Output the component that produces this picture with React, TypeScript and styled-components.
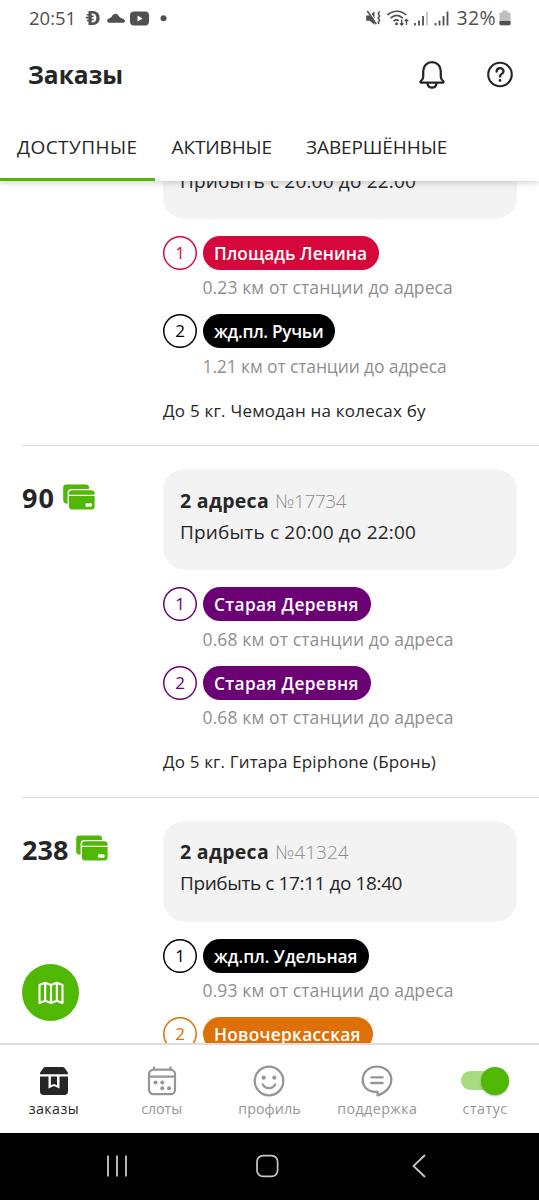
import React from 'react';
import styled, { createGlobalStyle } from 'styled-components';

const GREEN = '#50b805';
const INK = '#262626';
const GREY = '#8f8f8f';

const GlobalStyle = createGlobalStyle`
  * { box-sizing: border-box; }
  body {
    margin: 0;
    background: #fff;
    color: ${INK};
    font-family: 'Open Sans', 'Noto Sans', sans-serif;
  }
`;

interface Spacing {
  $ls?: number;
}

const Screen = styled.div`
  width: 539px;
  height: 1200px;
  display: flex;
  flex-direction: column;
  background: #fff;
  overflow: hidden;
`;

const Top = styled.header`
  position: relative;
  z-index: 2;
  height: 181px;
  flex: none;
  display: flex;
  flex-direction: column;
  background: #fff;
  box-shadow: 0 1px 7px rgba(0, 0, 0, 0.22);
`;

const StatusBar = styled.div`
  height: 35px;
  padding: 0 28px 0 29px;
  display: flex;
  justify-content: space-between;
  align-items: center;
  color: #505050;
`;

const StatusGroup = styled.div<{ $gap: number }>`
  display: flex;
  align-items: center;
  gap: ${(p) => p.$gap}px;
`;

const StatusText = styled.span<Spacing & { $size: number }>`
  font-size: ${(p) => p.$size}px;
  line-height: 35px;
  letter-spacing: ${(p) => p.$ls ?? 0}px;
`;

const TitleBar = styled.div`
  height: 80px;
  padding: 0 25px 1px 28px;
  display: flex;
  align-items: center;
  justify-content: space-between;
`;

const Title = styled.h1`
  margin: 0;
  font-size: 24.5px;
  font-weight: 700;
  line-height: 40px;
`;

const Actions = styled.div`
  display: flex;
  align-items: center;
  gap: 40px;
`;

const Tabs = styled.nav`
  flex: 1;
  display: flex;
`;

const Tab = styled.div<Spacing & { $active?: boolean }>`
  height: 66px;
  padding: 0 17px;
  font-size: 19px;
  line-height: 65px;
  letter-spacing: ${(p) => p.$ls ?? 0}px;
  white-space: nowrap;
  border-bottom: 3px solid ${(p) => (p.$active ? GREEN : 'transparent')};
`;

const List = styled.main`
  position: relative;
  flex: 1;
  overflow: hidden;
`;

const Feed = styled.div`
  margin: -87px 0 0 22px;
`;

const Order = styled.article`
  height: 351.4px;
  padding-top: 23px;
  border-top: 1px solid #dadada;
  display: flex;
`;

const PriceColumn = styled.div`
  width: 141px;
  flex: none;
  display: flex;
  align-items: center;
  height: 55px;
  gap: 8px;
`;

const Price = styled.span<Spacing>`
  margin-top: 3px;
  font-size: 27px;
  font-weight: 700;
  line-height: 30px;
  letter-spacing: ${(p) => p.$ls ?? 0}px;
`;

const Details = styled.div`
  width: 354px;
  flex: none;
`;

const Summary = styled.div`
  height: 101px;
  padding: 0 17px 22.5px;
  display: flex;
  flex-direction: column;
  justify-content: flex-end;
  border-radius: 22px;
  background: #f3f3f3;
`;

const SummaryLine = styled.div<Spacing>`
  font-size: 19px;
  line-height: 31px;
  letter-spacing: ${(p) => p.$ls ?? 0}px;
  white-space: nowrap;
`;

const AddressCount = styled.b`
  font-weight: 700;
  font-size: 19.5px;
  letter-spacing: 0.3px;
`;

const OrderNumber = styled.span<Spacing>`
  margin-left: 6px;
  color: #8c8c8c;
  font-weight: 300;
  letter-spacing: ${(p) => p.$ls ?? 0}px;
`;

const Stops = styled.div`
  margin-top: 17px;
  display: flex;
  flex-direction: column;
  gap: 15px;
`;

const Stop = styled.div`
  display: grid;
  grid-template-columns: 34px 1fr;
  column-gap: 5.5px;
  row-gap: 5.3px;
`;

const StopIndex = styled.div<{ $color: string }>`
  width: 34px;
  height: 34px;
  border-radius: 50%;
  box-shadow: inset 0 0 0 1.5px ${(p) => p.$color};
  color: ${(p) => p.$color};
  font-size: 17px;
  line-height: 34px;
  text-align: center;
`;

const Station = styled.div<Spacing & { $color: string }>`
  justify-self: start;
  height: 34px;
  padding: 0 12px 0 11.5px;
  border-radius: 17px;
  background: ${(p) => p.$color};
  color: #fff;
  font-size: 17.3px;
  font-weight: 600;
  line-height: 35px;
  letter-spacing: ${(p) => p.$ls ?? 0}px;
  white-space: nowrap;
`;

const Distance = styled.div<Spacing>`
  grid-column: 2;
  color: ${GREY};
  font-size: 17.5px;
  line-height: 24px;
  letter-spacing: ${(p) => p.$ls ?? 0}px;
  white-space: nowrap;
`;

const Note = styled.div<Spacing>`
  margin-top: 21px;
  font-size: 17px;
  line-height: 24px;
  letter-spacing: ${(p) => p.$ls ?? 0}px;
  white-space: nowrap;
`;

const MapButton = styled.button`
  position: absolute;
  left: 22px;
  bottom: 22px;
  width: 57px;
  height: 57px;
  padding: 0;
  border: 0;
  border-radius: 50%;
  background: ${GREEN};
  display: flex;
  align-items: center;
  justify-content: center;
`;

const BottomNav = styled.nav`
  height: 90px;
  flex: none;
  border-top: 2px solid #dedede;
  display: grid;
  grid-template-columns: repeat(5, 1fr);
  background: #fff;
`;

const NavItem = styled.div<{ $active?: boolean }>`
  padding-top: 18px;
  display: flex;
  flex-direction: column;
  align-items: center;
  color: ${(p) => (p.$active ? INK : '#969696')};
`;

const NavIcon = styled.div`
  height: 35px;
  display: flex;
  align-items: center;
`;

const NavLabel = styled.span<Spacing>`
  font-size: 14.2px;
  line-height: 21px;
  letter-spacing: ${(p) => p.$ls ?? 0}px;
`;

const Track = styled.div`
  width: 48px;
  height: 19px;
  border-radius: 10px;
  background: linear-gradient(to right, #a6db7e 38px, transparent 38px);
  display: flex;
  align-items: center;
  justify-content: flex-end;
`;

const Knob = styled.div`
  width: 28px;
  height: 28px;
  flex: none;
  border-radius: 50%;
  background: ${GREEN};
  box-shadow: 0 1px 2px rgba(0, 0, 0, 0.3);
`;

const SystemBar = styled.footer`
  height: 67px;
  flex: none;
  padding: 0 112px 2px 106px;
  display: grid;
  grid-template-columns: 149px 1fr auto;
  align-items: center;
  background: #000;
`;

const StatusLeftIcons = () => (
  <svg width="84" height="20" viewBox="0 0 84 20" fill="#505050">
    <path d="M3.500 3h4.200c4.600 0 6.900 2.900 6.900 7s-2.300 7-6.900 7H3.500v-3.700H1.800v-1.500h1.700v-1.400H.800V8.800h2.700V7.600H1.800V6.100h1.700zM6.600 5.500v2.100h2v1.500h-2v1.700h2v1.500h-2v2.200h1c2.500 0 3.700-1.700 3.700-4.500s-1.200-4.500-3.700-4.500z" fillRule="evenodd" />
    <path d="M24.500 14.800h13.400c2.700 0 2.900-3 .3-3.800l-3.200-1.400c-1.300-1.600-2.400-3.800-4.700-3.800-2.400 0-3 2.300-3.800 3.300l-2.500 1.400c-2.700 1-2.200 4.300.5 4.300z" />
    <rect x="45" y="3.500" width="19" height="14" rx="4" />
    <path d="M52.500 7.500v6l5-3z" fill="#fff" />
    <circle cx="78.500" cy="10.300" r="3" />
  </svg>
);

const StatusRightIcons = () => (
  <svg width="88" height="20" viewBox="0 0 88 20" fill="none" stroke="#505050" strokeWidth="1.700">
    <path d="M1.200 7.600h3.400L9.500 3.200v13.600l-4.900-4H1.200z" fill="#505050" stroke="none" />
    <path d="M3.700 2.700l8 11.600" stroke="#fff" strokeWidth="1.300" />
    <path d="M2.300 3l9 13.200" strokeWidth="1.500" />
    <path d="M14.600 3.500l-1.400 2.200 1.400 2.200-1.400 2.200 1.400 2.200-1.400 2.200.8 1.500" strokeWidth="1.500" />
    <path d="M22.500 7c5.500-5 13.500-5 18.500 0M25.500 10.200c4-3.500 8.500-3.500 12.300 0M28.500 13.200c1.800-1.500 3.600-1.600 5.200-.6" />
    <circle cx="31.500" cy="15.800" r="1.500" fill="#505050" stroke="none" />
    <path d="M36.700 11.500v5.500M34.900 15.300l1.800 1.800 1.800-1.800M41.500 17v-5.500M39.700 13.200l1.800-1.800 1.800 1.800" strokeWidth="1.300" />
    <path d="M50 17.500V15M54 17.500v-5M58 17.500V8" strokeWidth="1.800" />
    <path d="M62 17.500V3.500" stroke="#c4c4c4" strokeWidth="1.800" />
    <path d="M70.500 17.500V15M74.500 17.500v-5M78.500 17.500V8M82.500 17.500V3.500" strokeWidth="1.800" />
  </svg>
);

const Battery = () => (
  <svg width="12" height="18" viewBox="0 0 12 18">
    <path d="M3.500 1.500h5v2h2c.6 0 1 .4 1 1v10.300c0 .9-.5 1.400-1.400 1.400H1.900c-.9 0-1.400-.5-1.400-1.400V4.500c0-.6.4-1 1-1h2z" fill="#bfbfbf" />
    <path d="M.5 12h11v2.800c0 .9-.5 1.400-1.400 1.400H1.900c-.9 0-1.400-.5-1.400-1.400z" fill="#505050" />
  </svg>
);

const Bell = () => (
  <svg width="28" height="30" viewBox="0 0 28 30" fill="none" stroke={INK} strokeWidth="2.300" strokeLinejoin="round" strokeLinecap="round">
    <path d="M2.800 22.600h22.400c.6-.8.200-1.500-.5-2-1.200-.9-1.900-2.300-1.900-4.200v-5C22.800 5.800 19 2.200 14 2.200S5.200 5.800 5.200 11.400v5c0 1.900-.7 3.300-1.900 4.200-.7.500-1.100 1.200-.5 2z" />
    <path d="M9.500 23.400c.4 2.700 2 4.300 4.500 4.300s4.100-1.600 4.500-4.300" />
  </svg>
);

const Help = () => (
  <svg width="28" height="28" viewBox="0 0 28 28" fill="none" stroke={INK} strokeWidth="2.100">
    <circle cx="14" cy="13.500" r="11.800" />
    <path d="M10.600 10.700c0-4.600 6.900-4.600 6.900-.5 0 2.800-3.500 2.700-3.500 5.400" strokeWidth="2.300" strokeLinecap="round" />
    <circle cx="14" cy="19.400" r="1.400" fill={INK} stroke="none" />
  </svg>
);

const Cards = ({ double }: { double?: boolean }) => (
  <svg width="32" height="26" viewBox="0 0 32 26" fill={GREEN}>
    <path d="M3 .5h20c1.800 0 3 1.200 3 3V5H8.500C6 5 4.600 6.400 4.600 8.800v11C1.500 19.800.2 18.500.2 16V3.500C.2 1.700 1.200.5 3 .5z" />
    <path d="M9 6.200h19.500c1.700 0 2.900 1 3.100 2.800v1.700H6V9c.2-1.800 1.300-2.800 3-2.800z" />
    <path d="M6 12h25.600v10.500c0 2-1.100 3-3.100 3H9c-2 0-3-1-3-3z" />
    {double ? (
      <g fill="#fff">
        <circle cx="24.200" cy="21" r="1.900" />
        <circle cx="27.200" cy="21" r="1.900" />
      </g>
    ) : (
      <rect x="22" y="19.200" width="6.600" height="3.500" rx="1" fill="#fff" />
    )}
  </svg>
);

const MapIcon = () => (
  <svg width="26" height="24" viewBox="0 0 26 24" fill="none" stroke="#fff" strokeWidth="2.100" strokeLinejoin="round">
    <path d="M1.500 4l5.700-2.200L13 4l5.800-2.200L24.500 4v18l-5.700-2.200L13 22l-5.800-2.200L1.500 22zM7.200 1.800v18M13 4v18M18.800 1.800v18" />
  </svg>
);

const BoxIcon = () => (
  <svg width="30" height="30" viewBox="0 0 30 30" fill="currentColor">
    <path d="M6.500 1h17c1 0 1.800.4 2.300 1.200L28.500 6c.4.600.5 1.200.5 2.200H1C1 7.200 1.100 6.600 1.500 6l2.700-3.800C4.700 1.400 5.500 1 6.500 1z" />
    <path d="M1 10.600h8.500v12l5.400-2.500 5.600 2.500v-12H29v14.600c0 2.500-1.300 3.800-3.800 3.800H4.800C2.300 29 1 27.700 1 25.200z" />
    <path d="M11.900 10.600H18v8.700l-3.100-1.400-3 1.400z" />
  </svg>
);

const CalendarIcon = () => (
  <svg width="30" height="30" viewBox="0 0 30 30" fill="none" stroke="currentColor" strokeWidth="2.200" strokeLinecap="round">
    <rect x="2" y="3.700" width="26" height="24.500" rx="4.500" />
    <path d="M2 10.600h26M7 1.300v2.400M23.500 1.300v2.400" />
    <g fill="currentColor" stroke="none">
      <circle cx="8.500" cy="16.500" r="2" />
      <circle cx="15.300" cy="16.500" r="2" />
      <circle cx="15.300" cy="22.300" r="2" />
      <circle cx="22" cy="22.300" r="2" />
    </g>
  </svg>
);

const SmileIcon = () => (
  <svg width="32" height="32" viewBox="0 0 32 32" fill="none" stroke="currentColor" strokeWidth="2.300" strokeLinecap="round">
    <circle cx="16" cy="16" r="14.300" />
    <path d="M9.800 19.500c2.600 4.800 9.800 4.800 12.400 0" />
    <circle cx="10.700" cy="12.700" r="2.100" fill="currentColor" stroke="none" />
    <circle cx="21.300" cy="12.700" r="2.100" fill="currentColor" stroke="none" />
  </svg>
);

const ChatIcon = () => (
  <svg width="32" height="32" viewBox="0 0 32 32" fill="none" stroke="currentColor" strokeWidth="2.300" strokeLinecap="round" strokeLinejoin="round">
    <path d="M16.500 30.300v-3.500C7 27.800 1.700 21.600 1.700 15 1.700 7.200 8 1.700 16 1.700s14.300 5.600 14.300 13c0 6.800-5.600 13.300-13.800 15.600z" />
    <path d="M10.300 12.300h11.400M10.300 18h11.400" />
  </svg>
);

const RecentsIcon = () => (
  <svg width="22" height="24" viewBox="0 0 22 24" stroke="#bdbdbd" strokeWidth="1.900">
    <path d="M2 1.500v21M11 1.500v21M20 1.500v21" />
  </svg>
);

const HomeIcon = () => (
  <svg width="24" height="24" viewBox="0 0 24 24" fill="none" stroke="#c8c8c8" strokeWidth="1.700">
    <rect x="2" y="1.700" width="20.600" height="20.600" rx="6" />
  </svg>
);

const BackIcon = () => (
  <svg width="16" height="24" viewBox="0 0 16 24" fill="none" stroke="#c8c8c8" strokeWidth="1.800">
    <path d="M14 1L2.500 12 14 23" />
  </svg>
);

interface StopData {
  name: string;
  ls: number;
  color: string;
  distance?: string;
  dls?: number;
}

interface OrderData {
  price?: string;
  pls?: number;
  double?: boolean;
  number?: string;
  nls?: number;
  arrival: string;
  als: number;
  stops: StopData[];
  note?: string;
  tls?: number;
}

const orders: OrderData[] = [
  {
    arrival: 'Прибыть с 20:00 до 22:00',
    als: 0.18,
    stops: [
      { name: 'Площадь Ленина', ls: 0.05, color: '#d6083b', distance: '0.23 км от станции до адреса', dls: 0.1 },
      { name: 'жд.пл. Ручьи', ls: -0.3, color: '#000', distance: '1.21 км от станции до адреса', dls: -0.13 },
    ],
    note: 'До 5 кг. Чемодан на колесах бу',
    tls: 0.22,
  },
  {
    price: '90',
    pls: 1,
    double: true,
    number: '№17734',
    nls: -0.35,
    arrival: 'Прибыть с 20:00 до 22:00',
    als: 0.18,
    stops: [
      { name: 'Старая Деревня', ls: 0.36, color: '#6c0075', distance: '0.68 км от станции до адреса', dls: 0.12 },
      { name: 'Старая Деревня', ls: 0.36, color: '#6c0075', distance: '0.68 км от станции до адреса', dls: 0.12 },
    ],
    note: 'До 5 кг. Гитара Epiphone (Бронь)',
    tls: 0.15,
  },
  {
    price: '238',
    number: '№41324',
    nls: 0.05,
    arrival: 'Прибыть с 17:11 до 18:40',
    als: -0.4,
    stops: [
      { name: 'жд.пл. Удельная', ls: -0.03, color: '#000', distance: '0.93 км от станции до адреса', dls: 0.12 },
      { name: 'Новочеркасская', ls: 0.28, color: '#df7007' },
    ],
  },
];

export default function App() {
  return (
    <Screen>
      <GlobalStyle />
      <Top>
        <StatusBar>
          <StatusGroup $gap={9}>
            <StatusText $size={18.5}>20:51</StatusText>
            <StatusLeftIcons />
          </StatusGroup>
          <StatusGroup $gap={3}>
            <StatusRightIcons />
            <StatusText $size={19.5} $ls={0.4}>32%</StatusText>
            <Battery />
          </StatusGroup>
        </StatusBar>
        <TitleBar>
          <Title>Заказы</Title>
          <Actions>
            <Bell />
            <Help />
          </Actions>
        </TitleBar>
        <Tabs>
          <Tab $active $ls={0.45}>ДОСТУПНЫЕ</Tab>
          <Tab $ls={-0.12}>АКТИВНЫЕ</Tab>
          <Tab $ls={-0.1}>ЗАВЕРШЁННЫЕ</Tab>
        </Tabs>
      </Top>
      <List>
        <Feed>
          {orders.map((o, i) => (
            <Order key={i}>
              <PriceColumn>
                {o.price && (
                  <>
                    <Price $ls={o.pls}>{o.price}</Price>
                    <Cards double={o.double} />
                  </>
                )}
              </PriceColumn>
              <Details>
                <Summary>
                  {o.number && (
                    <SummaryLine>
                      <AddressCount>2 адреса</AddressCount>
                      <OrderNumber $ls={o.nls}>{o.number}</OrderNumber>
                    </SummaryLine>
                  )}
                  <SummaryLine $ls={o.als}>{o.arrival}</SummaryLine>
                </Summary>
                <Stops>
                  {o.stops.map((s, n) => (
                    <Stop key={n}>
                      <StopIndex $color={s.color}>{n + 1}</StopIndex>
                      <Station $color={s.color} $ls={s.ls}>{s.name}</Station>
                      {s.distance && <Distance $ls={s.dls}>{s.distance}</Distance>}
                    </Stop>
                  ))}
                </Stops>
                {o.note && <Note $ls={o.tls}>{o.note}</Note>}
              </Details>
            </Order>
          ))}
        </Feed>
        <MapButton aria-label="Карта">
          <MapIcon />
        </MapButton>
      </List>
      <BottomNav>
        <NavItem $active>
          <NavIcon><BoxIcon /></NavIcon>
          <NavLabel $ls={0.4}>заказы</NavLabel>
        </NavItem>
        <NavItem>
          <NavIcon><CalendarIcon /></NavIcon>
          <NavLabel $ls={-0.05}>слоты</NavLabel>
        </NavItem>
        <NavItem>
          <NavIcon><SmileIcon /></NavIcon>
          <NavLabel $ls={0.1}>профиль</NavLabel>
        </NavItem>
        <NavItem>
          <NavIcon><ChatIcon /></NavIcon>
          <NavLabel $ls={0.48}>поддержка</NavLabel>
        </NavItem>
        <NavItem>
          <NavIcon><Track><Knob /></Track></NavIcon>
          <NavLabel $ls={0.5}>статус</NavLabel>
        </NavItem>
      </BottomNav>
      <SystemBar>
        <RecentsIcon />
        <HomeIcon />
        <BackIcon />
      </SystemBar>
    </Screen>
  );
}
